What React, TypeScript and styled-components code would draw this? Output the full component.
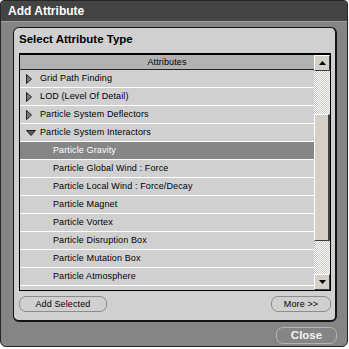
import React from "react";
import styled, { createGlobalStyle } from "styled-components";

const Global = createGlobalStyle`
  html, body { margin: 0; padding: 0; background: #ffffff; }
  body { font-family: "Liberation Sans", Arial, sans-serif; }
`;

const Window = styled.div`
  box-sizing: border-box;
  width: 348px;
  height: 347px;
  border: 1px solid #262626;
  border-radius: 4px 4px 6px 6px;
  background: #858585;
  overflow: hidden;
  display: flex;
  flex-direction: column;
`;

const TitleBar = styled.div`
  height: 20px;
  flex: none;
  background: #444444;
  border-bottom: 1px solid #a0a0a0;
  color: #ffffff;
  font-weight: bold;
  font-size: 12px;
  line-height: 20px;
  padding-left: 7px;
`;

const Body = styled.div`
  flex: 1;
  padding: 5px 10px 2px 12px;
  display: flex;
  flex-direction: column;
`;

const Panel = styled.div`
  box-sizing: border-box;
  height: 295px;
  background: #d0d0d0;
  border: 1px solid #151515;
  border-right-width: 2px;
  border-bottom-width: 2px;
  border-radius: 6px;
  padding: 4px 5px 8px 5px;
  display: flex;
  flex-direction: column;
`;

const Heading = styled.div`
  font-weight: bold;
  font-size: 11.5px;
  line-height: 14px;
  color: #000;
  margin-bottom: 7px;
`;

const ListBox = styled.div`
  box-sizing: border-box;
  width: 312px;
  height: 238px;
  border: 1px solid #000;
  border-top-width: 2px;
  display: flex;
  overflow: hidden;
`;

const ListColumn = styled.div`
  flex: 1;
  display: flex;
  flex-direction: column;
  overflow: hidden;
`;

const Header = styled.div`
  height: 14px;
  flex: none;
  background: #b2b2b2;
  border-bottom: 1px solid #222;
  font-size: 9px;
  letter-spacing: 0.12px;
  line-height: 14px;
  text-align: center;
  color: #000;
`;

const Row = styled.div<{ $selected?: boolean; $child?: boolean }>`
  height: 17px;
  flex: none;
  border-bottom: 1px solid #ffffff;
  background: ${(p) => (p.$selected ? "#868686" : "#d0d0d0")};
  color: ${(p) => (p.$selected ? "#ffffff" : "#000000")};
  font-size: 9px;
  letter-spacing: 0.12px;
  line-height: 17px;
  display: flex;
  align-items: center;
  padding-left: ${(p) => (p.$child ? "33px" : "6px")};
  white-space: nowrap;
`;

const Arrow = styled.span`
  width: 10px;
  height: 17px;
  margin-right: 4px;
  display: flex;
  align-items: center;
`;

const ScrollBar = styled.div`
  width: 16px;
  flex: none;
  display: flex;
  flex-direction: column;
`;

const ScrollButton = styled.div`
  box-sizing: border-box;
  height: 16px;
  flex: none;
  background: #d4d0c8;
  border-top: 1px solid #ffffff;
  border-left: 1px solid #ffffff;
  border-right: 1px solid #404040;
  border-bottom: 1px solid #404040;
  display: flex;
  align-items: center;
  justify-content: center;
`;

const Track = styled.div<{ $grow?: boolean; $h?: number }>`
  flex: ${(p) => (p.$grow ? 1 : "none")};
  height: ${(p) => (p.$h ? `${p.$h}px` : "auto")};
  background-color: #ffffff;
  background-image: conic-gradient(#ffffff 25%, #c8c8c4 0 50%, #ffffff 0 75%, #c8c8c4 0);
  background-size: 2px 2px;
`;

const Thumb = styled.div`
  box-sizing: border-box;
  height: 127px;
  flex: none;
  background: #d4d0c8;
  border-top: 1px solid #ffffff;
  border-left: 1px solid #ffffff;
  border-right: 2px solid #404040;
  border-bottom: 1px solid #404040;
`;

const ButtonRow = styled.div`
  margin-top: 5px;
  display: flex;
  justify-content: space-between;
  width: 312px;
`;

const PillButton = styled.button<{ $w: number }>`
  box-sizing: border-box;
  width: ${(p) => p.$w}px;
  height: 16px;
  padding: 0;
  background: transparent;
  border: 1px solid #8c8c8c;
  border-radius: 7px;
  font-family: "Liberation Sans", Arial, sans-serif;
  font-size: 9px;
  letter-spacing: 0.12px;
  color: #000;
  line-height: 14px;
`;

const Footer = styled.div`
  margin-top: 5px;
  display: flex;
  justify-content: flex-end;
`;

const CloseButton = styled.button`
  box-sizing: border-box;
  width: 61px;
  height: 17px;
  padding: 0;
  background: transparent;
  border: 1px solid #b4b4b4;
  border-radius: 7px;
  font-family: "Liberation Sans", Arial, sans-serif;
  font-weight: bold;
  font-size: 11.5px;
  color: #f2f2f2;
  line-height: 15px;
`;

const RightTri = () => (
  <svg width="6" height="10" viewBox="0 0 6 10">
    <polygon points="0.5,0.5 5.5,5 0.5,9.5" fill="#7a7a7a" stroke="#222" strokeWidth="1" />
  </svg>
);

const DownTri = () => (
  <svg width="10" height="6" viewBox="0 0 10 6">
    <polygon points="0.5,0.5 9.5,0.5 5,5.5" fill="#5a5a5a" stroke="#222" strokeWidth="1" />
  </svg>
);

const UpArrow = () => (
  <svg width="7" height="4" viewBox="0 0 7 4">
    <polygon points="0,4 7,4 3.5,0" fill="#000" />
  </svg>
);

const DownArrow = () => (
  <svg width="7" height="4" viewBox="0 0 7 4">
    <polygon points="0,0 7,0 3.5,4" fill="#000" />
  </svg>
);

type Item = { label: string; kind: "closed" | "open" | "child"; selected?: boolean };

const items: Item[] = [
  { label: "Grid Path Finding", kind: "closed" },
  { label: "LOD (Level Of Detail)", kind: "closed" },
  { label: "Particle System Deflectors", kind: "closed" },
  { label: "Particle System Interactors", kind: "open" },
  { label: "Particle Gravity", kind: "child", selected: true },
  { label: "Particle Global Wind : Force", kind: "child" },
  { label: "Particle Local Wind : Force/Decay", kind: "child" },
  { label: "Particle Magnet", kind: "child" },
  { label: "Particle Vortex", kind: "child" },
  { label: "Particle Disruption Box", kind: "child" },
  { label: "Particle Mutation Box", kind: "child" },
  { label: "Particle Atmosphere", kind: "child" },
  { label: "", kind: "child" },
];

export default function App() {
  return (
    <>
      <Global />
      <Window>
        <TitleBar>Add Attribute</TitleBar>
        <Body>
          <Panel>
            <Heading>Select Attribute Type</Heading>
            <ListBox>
              <ListColumn>
                <Header>Attributes</Header>
                {items.map((it, i) => (
                  <Row key={i} $selected={it.selected} $child={it.kind === "child"}>
                    {it.kind !== "child" && (
                      <Arrow>{it.kind === "open" ? <DownTri /> : <RightTri />}</Arrow>
                    )}
                    {it.label}
                  </Row>
                ))}
              </ListColumn>
              <ScrollBar>
                <ScrollButton>
                  <UpArrow />
                </ScrollButton>
                <Track $h={43} />
                <Thumb />
                <Track $grow />
                <ScrollButton>
                  <DownArrow />
                </ScrollButton>
              </ScrollBar>
            </ListBox>
            <ButtonRow>
              <PillButton $w={88}>Add Selected</PillButton>
              <PillButton $w={60}>More &gt;&gt;</PillButton>
            </ButtonRow>
          </Panel>
          <Footer>
            <CloseButton>Close</CloseButton>
          </Footer>
        </Body>
      </Window>
    </>
  );
}
